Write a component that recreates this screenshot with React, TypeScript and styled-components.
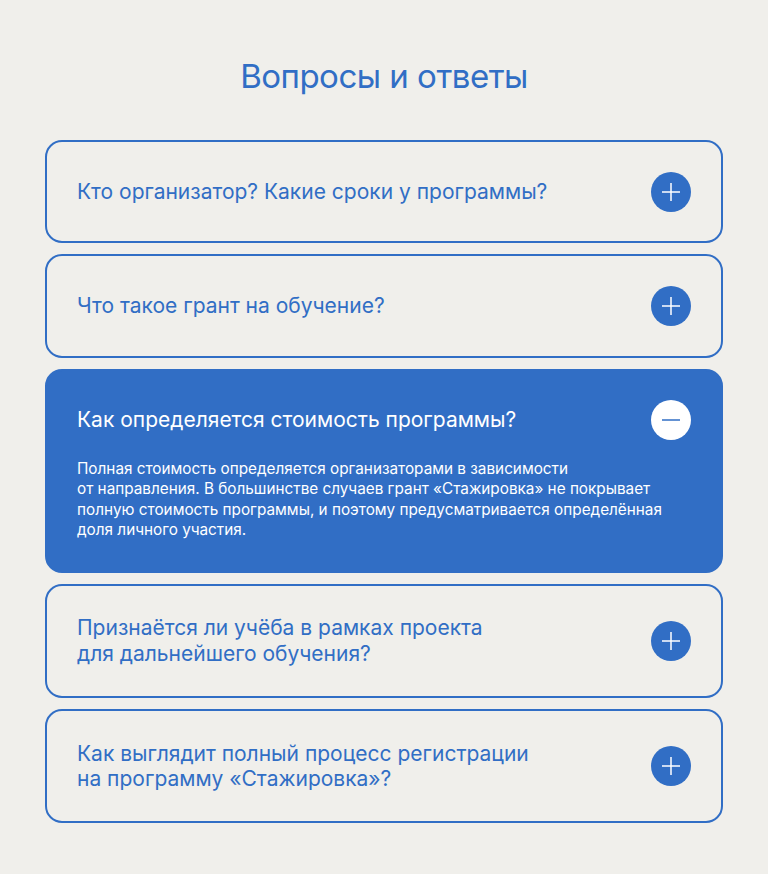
import { useState } from "react";
import styled, { createGlobalStyle } from "styled-components";

const pal = {
	bg: "#f0efeb",
	blue: "#316ec5",
	white: "#ffffff",
};

const GlobalStyle = createGlobalStyle`
	html, body {
		margin: 0;
		padding: 0;
		background: ${pal.bg};
	}
	body {
		font-family: Inter, "Noto Sans", sans-serif;
	}
`;

const Page = styled.div`
	width: 768px;
	min-height: 874px;
	box-sizing: border-box;
	padding: 56px 45px 40px 45px;
	display: flex;
	flex-direction: column;
	align-items: stretch;
`;

const Title = styled.h2`
	margin: 0 0 44px 0;
	text-align: center;
	font-weight: 400;
	font-size: 33px;
	line-height: 40px;
	letter-spacing: -0.5px;
	color: ${pal.blue};
`;

const List = styled.div`
	display: flex;
	flex-direction: column;
	gap: 11px;
`;

const Card = styled.div<{ $open: boolean }>`
	border: 2px solid ${pal.blue};
	border-radius: 17px;
	background: ${(p) => (p.$open ? pal.blue : "transparent")};
	color: ${(p) => (p.$open ? pal.white : pal.blue)};
	padding: 29.65px 30px;
	display: flex;
	flex-direction: column;
	gap: 18.7px;
`;

const Head = styled.div`
	display: flex;
	align-items: center;
	justify-content: space-between;
	min-height: 40px;
	cursor: pointer;
`;

const Question = styled.div`
	font-size: 21px;
	line-height: 25.6px;
	letter-spacing: 0;
`;

const Toggle = styled.div<{ $open: boolean }>`
	width: 40px;
	height: 40px;
	border-radius: 50%;
	flex-shrink: 0;
	background: ${(p) => (p.$open ? pal.white : pal.blue)};
	display: flex;
	align-items: center;
	justify-content: center;
`;

const Answer = styled.p`
	margin: 0;
	font-size: 15.3px;
	line-height: 20.5px;
	letter-spacing: 0;
`;

const items = [
	{ q: ["Кто организатор? Какие сроки у программы?"], a: null },
	{ q: ["Что такое грант на обучение?"], a: null },
	{
		q: ["Как определяется стоимость программы?"],
		a: [
			"Полная стоимость определяется организаторами в зависимости",
			"от направления. В большинстве случаев грант «Стажировка» не покрывает",
			"полную стоимость программы, и поэтому предусматривается определённая",
			"доля личного участия.",
		],
	},
	{ q: ["Признаётся ли учёба в рамках проекта", "для дальнейшего обучения?"], a: null },
	{ q: ["Как выглядит полный процесс регистрации", "на программу «Стажировка»?"], a: null },
];

function Lines({ lines }: { lines: string[] }) {
	return (
		<>
			{lines.map((l, i) => (
				<span key={i}>
					{l}
					{i < lines.length - 1 && <br />}
				</span>
			))}
		</>
	);
}

export default function App() {
	const [open, setOpen] = useState(2);
	return (
		<>
			<GlobalStyle />
			<Page>
				<Title>Вопросы и ответы</Title>
				<List>
					{items.map((it, i) => {
						const isOpen = open === i;
						return (
							<Card key={i} $open={isOpen}>
								<Head onClick={() => setOpen(isOpen ? -1 : i)}>
									<Question>
										<Lines lines={it.q} />
									</Question>
									<Toggle $open={isOpen}>
										<svg width="20" height="20" viewBox="0 0 20 20">
											<line x1="1" y1="10" x2="19" y2="10" stroke={isOpen ? pal.blue : pal.white} strokeWidth="1.5" />
											{!isOpen && <line x1="10" y1="1" x2="10" y2="19" stroke={pal.white} strokeWidth="1.5" />}
										</svg>
									</Toggle>
								</Head>
								{isOpen && it.a && (
									<Answer>
										<Lines lines={it.a} />
									</Answer>
								)}
							</Card>
						);
					})}
				</List>
			</Page>
		</>
	);
}
